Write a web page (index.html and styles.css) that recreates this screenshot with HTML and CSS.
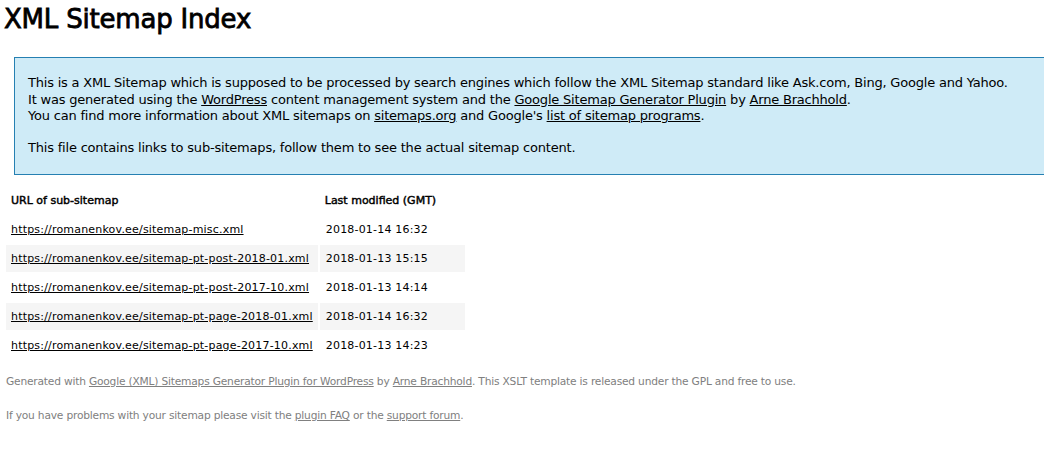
FILE: index.html
```html
<!DOCTYPE html>
<html>
<head>
<meta charset="utf-8">
<title>XML Sitemap Index</title>
<link rel="stylesheet" href="styles.css">
</head>
<body>
<div class="page">
  <h1 class="title">XML Sitemap Index</h1>
  <div class="intro">
    <p class="intro-first">This is a XML Sitemap which is supposed to be processed by search engines which follow the XML Sitemap standard like Ask.com, Bing, Google and Yahoo.<br>
    It was generated using the <a href="#">WordPress</a> content management system and the <a href="#">Google Sitemap Generator Plugin</a> by <a href="#">Arne Brachhold</a>.<br>
    You can find more information about XML sitemaps on <a href="#">sitemaps.org</a> and Google's <a href="#">list of sitemap programs</a>.</p>
    <p class="intro-last">This file contains links to sub-sitemaps, follow them to see the actual sitemap content.</p>
  </div>
  <table class="sitemaps">
    <tr>
      <th class="col-url">URL of sub-sitemap</th>
      <th class="col-date">Last modified (GMT)</th>
    </tr>
    <tr>
      <td><a href="#">https://romanenkov.ee/sitemap-misc.xml</a></td>
      <td>2018-01-14 16:32</td>
    </tr>
    <tr class="high">
      <td><a href="#">https://romanenkov.ee/sitemap-pt-post-2018-01.xml</a></td>
      <td>2018-01-13 15:15</td>
    </tr>
    <tr>
      <td><a href="#">https://romanenkov.ee/sitemap-pt-post-2017-10.xml</a></td>
      <td>2018-01-13 14:14</td>
    </tr>
    <tr class="high">
      <td><a href="#">https://romanenkov.ee/sitemap-pt-page-2018-01.xml</a></td>
      <td>2018-01-14 16:32</td>
    </tr>
    <tr>
      <td><a href="#">https://romanenkov.ee/sitemap-pt-page-2017-10.xml</a></td>
      <td>2018-01-13 14:23</td>
    </tr>
  </table>
  <div class="footer">
    <p>Generated with <a href="#">Google (XML) Sitemaps Generator Plugin for WordPress</a> by <a href="#">Arne Brachhold</a>. This XSLT template is released under the GPL and free to use.</p>
    <p>If you have problems with your sitemap please visit the <a href="#">plugin FAQ</a> or the <a href="#">support forum</a>.</p>
  </div>
</div>
</body>
</html>
```

FILE: styles.css
```css
html, body {
  margin: 0;
  padding: 0;
  background: #ffffff;
  overflow: hidden;
}
body {
  font-family: "DejaVu Sans", sans-serif;
  font-size: 13px;
  color: #000;
}
.page {
  padding: 0 0 0 4px;
}
a {
  color: #000;
}
.title {
  font-size: 26px;
  font-weight: normal;
  -webkit-text-stroke: 0.8px #000;
  letter-spacing: -0.2px;
  margin: 0;
  padding-top: 4px;
  line-height: 30px;
}
.intro {
  background-color: #CFEBF7;
  border: 1px solid #2580B2;
  padding: 5px 13px;
  margin: 23px -40px 10px 10px;
  letter-spacing: -0.2px;
}
.intro p {
  line-height: 16.5px;
  margin: 0;
}
.intro .intro-first {
  margin: 12px 0 15px 0;
}
.intro .intro-last {
  margin: 0 0 13px 0;
}
.sitemaps {
  border-spacing: 2px;
  margin-top: 0;
}
.sitemaps th {
  text-align: left;
  font-size: 11px;
  font-weight: normal;
  -webkit-text-stroke: 0.45px #000;
  padding: 7px 29px 7px 5px;
  line-height: 13px;
}
.sitemaps td {
  font-size: 11px;
  padding: 7px 5px 7px 5px;
  line-height: 13px;
  letter-spacing: 0.19px;
}
.sitemaps td + td {
  padding-left: 6px;
}
.sitemaps tr.high td {
  background-color: #f5f5f5;
}
.footer {
  padding: 2px;
  margin-top: 12px;
  font-size: 8pt;
  color: gray;
  letter-spacing: -0.2px;
}
.footer p {
  margin: 0 0 21px 0;
  line-height: 13px;
}
.footer a {
  color: gray;
}
```
